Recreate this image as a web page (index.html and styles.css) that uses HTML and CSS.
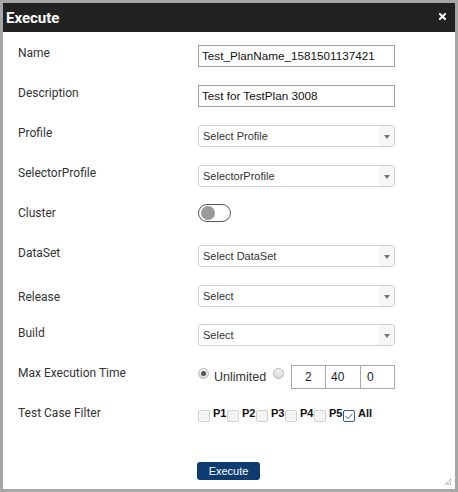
FILE: index.html
```html
<!DOCTYPE html>
<html>
<head>
<meta charset="utf-8">
<link rel="stylesheet" href="styles.css">
</head>
<body>
<div class="dialog">
  <div class="titlebar">
    <span class="title">Execute</span>
    <span class="close"><svg width="7" height="7" viewBox="0 0 7 7"><path d="M1 1 L6 6 M6 1 L1 6" stroke="#fff" stroke-width="2" stroke-linecap="square"/></svg></span>
  </div>
  <div class="form">
    <div class="row">
      <div class="label">Name</div>
      <div class="text-input">Test_PlanName_1581501137421</div>
    </div>
    <div class="row">
      <div class="label">Description</div>
      <div class="text-input">Test for TestPlan 3008</div>
    </div>
    <div class="row">
      <div class="label">Profile</div>
      <div class="select"><span class="select-text">Select Profile</span><span class="select-arrow"></span></div>
    </div>
    <div class="row h39">
      <div class="label">SelectorProfile</div>
      <div class="select"><span class="select-text">SelectorProfile</span><span class="select-arrow"></span></div>
    </div>
    <div class="row h41">
      <div class="label lbl-cluster">Cluster</div>
      <div class="toggle"><span class="knob"></span></div>
    </div>
    <div class="row">
      <div class="label">DataSet</div>
      <div class="select"><span class="select-text">Select DataSet</span><span class="select-arrow"></span></div>
    </div>
    <div class="row h39">
      <div class="label lbl-release">Release</div>
      <div class="select"><span class="select-text">Select</span><span class="select-arrow"></span></div>
    </div>
    <div class="row h40">
      <div class="label lbl-build">Build</div>
      <div class="select"><span class="select-text">Select</span><span class="select-arrow"></span></div>
    </div>
    <div class="row">
      <div class="label lbl-max">Max Execution Time</div>
      <div class="time-field">
        <span class="radio checked"></span>
        <span class="radio-label">Unlimited</span>
        <span class="radio"></span>
        <div class="time-boxes">
          <span class="tbox">2</span>
          <span class="tbox">40</span>
          <span class="tbox">0</span>
        </div>
      </div>
    </div>
    <div class="row">
      <div class="label lbl-filter">Test Case Filter</div>
      <div class="checks">
        <span class="cb"></span><span class="cb-label">P1</span>
        <span class="cb"></span><span class="cb-label">P2</span>
        <span class="cb"></span><span class="cb-label">P3</span>
        <span class="cb"></span><span class="cb-label">P4</span>
        <span class="cb"></span><span class="cb-label">P5</span>
        <span class="cb checked"><svg width="10" height="10" viewBox="0 0 10 10"><path d="M1.5 5 L4 7.5 L8.5 3" fill="none" stroke="#555" stroke-width="1"/></svg></span><span class="cb-label">All</span>
      </div>
    </div>
    <div class="actions">
      <button class="btn">Execute</button>
    </div>
  </div>
  <svg class="grip" width="8" height="8" viewBox="0 0 8 8">
    <path d="M7 1 L1 7 M7 3.5 L3.5 7 M7 6 L6 7" stroke="#555" stroke-width="1" stroke-dasharray="1 1"/>
  </svg>
</div>
</body>
</html>
```
FILE: styles.css
```css
body {
  margin: 0;
  background: #a6a6a6;
}

.dialog {
  position: relative;
  width: 458px;
  height: 492px;
  box-sizing: border-box;
  border: 3px solid #a6a6a6;
  background: #fff;
  font-family: Roboto, "Liberation Sans", sans-serif;
}

.titlebar {
  height: 29px;
  background: #222;
  display: flex;
  align-items: center;
  justify-content: space-between;
  padding: 0 9px 0 3px;
}

.title {
  color: #fff;
  font-weight: 700;
  font-size: 15px;
  line-height: 16px;
}

.close {
  display: flex;
  width: 7px;
  height: 7px;
  margin-top: -2px;
}

.form {
  padding: 13px 0 0 15px;
}

.row {
  display: flex;
  align-items: flex-start;
  height: 40px;
}

.row.h39 { height: 39px; }
.row.h41 { height: 41px; }

.label {
  width: 180px;
  flex: none;
  padding-top: 1px;
  font-size: 12px;
  line-height: 14px;
  color: #333;
}

.lbl-cluster { padding-top: 2px; }
.lbl-release { padding-top: 5px; }
.lbl-build { padding-top: 2px; }
.lbl-max { padding-top: 2px; }
.lbl-filter { padding-top: 2px; }

.text-input {
  width: 197px;
  height: 22px;
  box-sizing: border-box;
  border: 1px solid #a0a0a0;
  padding: 0 3px;
  font-family: "Liberation Sans", Arial, sans-serif;
  font-size: 11.7px;
  line-height: 20px;
  color: #111;
  white-space: nowrap;
  overflow: hidden;
}

.select {
  width: 197px;
  height: 22px;
  box-sizing: border-box;
  border: 1px solid #d0d0d0;
  border-radius: 3px;
  display: flex;
  overflow: hidden;
}

.select-text {
  flex: 1;
  padding-left: 4px;
  font-family: "Liberation Sans", Arial, sans-serif;
  font-size: 11px;
  line-height: 20px;
  color: #333;
}

.select-arrow {
  width: 15px;
  background: #f6f6f6;
  display: flex;
  align-items: center;
  justify-content: center;
}

.select-arrow::after {
  content: "";
  width: 0;
  height: 0;
  border-left: 3.5px solid transparent;
  border-right: 3.5px solid transparent;
  border-top: 4px solid #777;
  margin-top: 1px;
}

.toggle {
  width: 33px;
  height: 18px;
  box-sizing: border-box;
  border: 1px solid #555;
  border-radius: 9px;
  display: flex;
  align-items: center;
  padding-left: 2px;
}

.knob {
  width: 14px;
  height: 14px;
  border-radius: 50%;
  background: #9a9a9a;
}

.time-field {
  display: flex;
  align-items: flex-start;
}

.radio {
  width: 11px;
  height: 11px;
  box-sizing: border-box;
  border: 1px solid #b5b5b5;
  border-radius: 50%;
  background: linear-gradient(#f4f4f4, #d8d8d8);
  margin-top: 4px;
  display: flex;
  align-items: center;
  justify-content: center;
}

.radio.checked::after {
  content: "";
  width: 5px;
  height: 5px;
  border-radius: 50%;
  background: #555;
}

.radio-label {
  font-family: "Liberation Sans", Arial, sans-serif;
  font-size: 12.5px;
  line-height: 14px;
  color: #333;
  margin: 6px 7px 0 5px;
}

.time-boxes {
  display: flex;
  margin-left: 7px;
  margin-top: 1px;
}

.tbox {
  width: 35px;
  height: 24px;
  box-sizing: border-box;
  border: 1px solid #a8a8a8;
  font-family: "Liberation Sans", Arial, sans-serif;
  font-size: 12px;
  line-height: 22px;
  color: #222;
}

.tbox + .tbox { border-left: none; }
.tbox:nth-child(1) { padding-left: 13px; }
.tbox:nth-child(2) { padding-left: 5px; }
.tbox:nth-child(3) { width: 34px; padding-left: 6px; }

.checks {
  display: flex;
  align-items: flex-start;
}

.cb {
  width: 12px;
  height: 12px;
  box-sizing: border-box;
  border: 1px solid #d2d2d2;
  border-radius: 2px;
  background: #f4f4f4;
  margin-top: 6px;
  display: flex;
  align-items: center;
  justify-content: center;
}

.cb.checked {
  border-color: #2b5d8f;
  background: #fff;
}

.cb-label {
  font-family: "Liberation Sans", Arial, sans-serif;
  font-weight: 700;
  font-size: 11px;
  line-height: 14px;
  color: #111;
  margin-top: 2px;
  padding-left: 3px;
  width: 14px;
}

.actions {
  margin-top: 16px;
  padding-left: 179px;
}

.btn {
  width: 63px;
  height: 18px;
  border: none;
  border-radius: 3px;
  background: #0c3b72;
  color: #fff;
  font-family: "Liberation Sans", Arial, sans-serif;
  font-size: 11px;
  padding: 0;
  line-height: 18px;
}

.grip {
  position: absolute;
  right: 3px;
  bottom: 3px;
}
```
